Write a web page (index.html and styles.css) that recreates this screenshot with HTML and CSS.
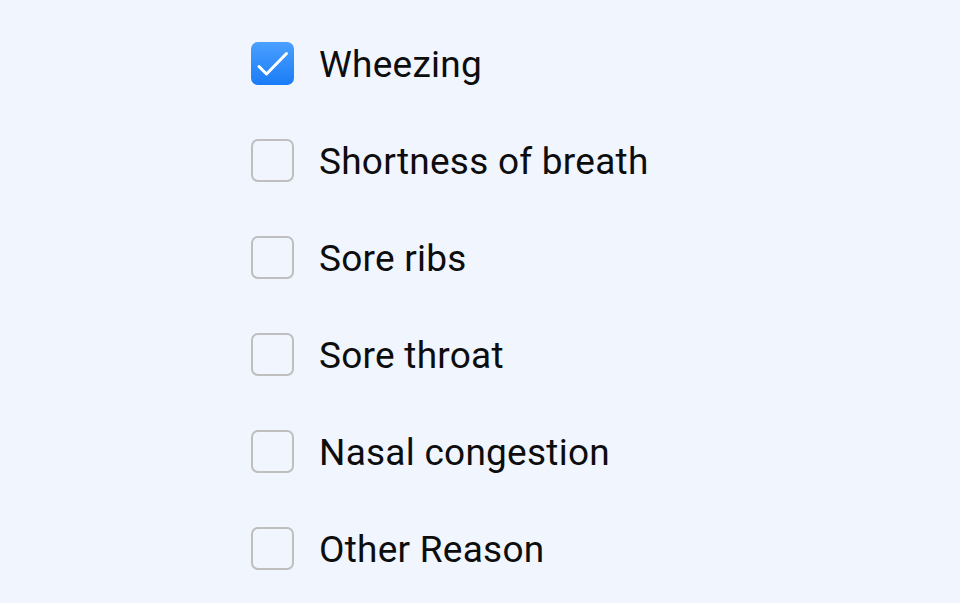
FILE: index.html
```html
<!DOCTYPE html>
<html lang="en">
<head>
    <meta charset="UTF-8">
    <title>Symptoms</title>
    <link rel="stylesheet" href="styles.css">
</head>
<body>
    <div class="symptoms">
        <label class="option">
            <span class="box checked">
                <svg viewBox="0 0 43 43" width="43" height="43"><path d="M8 24.5 L15.5 32 L35.5 11.5" fill="none" stroke="#fff" stroke-width="3" stroke-linecap="round" stroke-linejoin="round"/></svg>
            </span>
            <span class="text">Wheezing</span>
        </label>
        <label class="option">
            <span class="box"></span>
            <span class="text">Shortness of breath</span>
        </label>
        <label class="option">
            <span class="box"></span>
            <span class="text">Sore ribs</span>
        </label>
        <label class="option">
            <span class="box"></span>
            <span class="text">Sore throat</span>
        </label>
        <label class="option">
            <span class="box"></span>
            <span class="text">Nasal congestion</span>
        </label>
        <label class="option">
            <span class="box"></span>
            <span class="text">Other Reason</span>
        </label>
    </div>
</body>
</html>
```

FILE: styles.css
```css
html, body {
    margin: 0;
    padding: 0;
    background: #f0f5fe;
    height: 100%;
    overflow: hidden;
}
body {
    font-family: Roboto, "Liberation Sans", sans-serif;
    color: #0d0d0d;
}
.symptoms {
    display: flex;
    flex-direction: column;
    gap: 54px;
    padding: 42px 0 0 251px;
}
.option {
    display: flex;
    align-items: center;
    gap: 25px;
    height: 43px;
}
.box {
    width: 43px;
    height: 43px;
    box-sizing: border-box;
    border: 2px solid #bfbfbf;
    border-radius: 7px;
    flex-shrink: 0;
}
.box.checked {
    border: none;
    background: linear-gradient(180deg, #4ba0ff 0%, #1a7cf6 100%);
}
.box svg {
    display: block;
}
.text {
    font-size: 37px;
    letter-spacing: 0.25px;
    line-height: 43px;
    padding-top: 2px;
}
```
